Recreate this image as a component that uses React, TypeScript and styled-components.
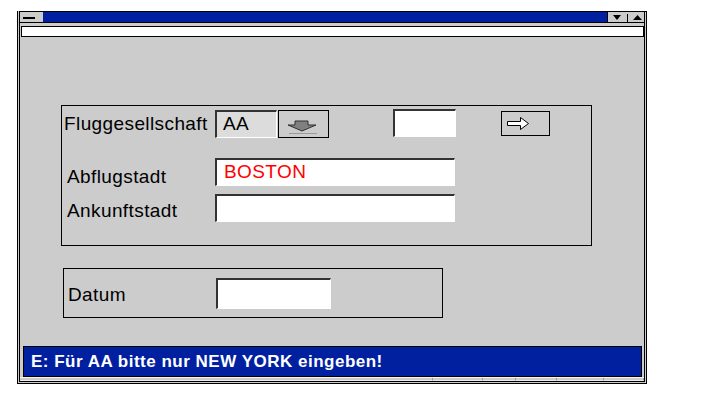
import styled, { createGlobalStyle } from "styled-components";

const GlobalStyle = createGlobalStyle`
  html, body {
    margin: 0;
    padding: 0;
    background: #ffffff;
  }
  body {
    font-family: "Liberation Sans", Arial, sans-serif;
  }
`;

const stripCells = [413, 50, 33, 41, 47];

export default function App() {
  return (
    <>
      <GlobalStyle />
      <Window>
        <TitleBar>
          <SysMenu>
            <SysDash />
          </SysMenu>
          <Caption />
          <TitleButtons>
            <svg width="36" height="10" viewBox="0 0 36 10">
              <polygon points="5,3 13,3 9,8" fill="#000" />
              <line x1="19.5" y1="2" x2="19.5" y2="10" stroke="#000" />
              <polygon points="25,8 34,8 29.5,3" fill="#000" />
            </svg>
          </TitleButtons>
        </TitleBar>
        <MenuLine />

        <Body>
          <Group $width={531} $height={141} $left={41} $top={68}>
            <Row $top={4}>
              <Label $pad={2} $width={153} $offset={3}>
                Fluggesellschaft
              </Label>
              <Field $width={62} $height={28} $bg="#dcdcdc">
                AA
              </Field>
              <PushButton $width={51} $height={28} $left={1}>
                <svg width="49" height="26" viewBox="0 0 49 26">
                  <polygon
                    points="16,10 29,10 29,14 37,14 23,20 9,14 16,14"
                    fill="#808080"
                    stroke="#303030"
                  />
                  <line x1="10" y1="22.5" x2="38" y2="22.5" stroke="#9a9a9a" />
                </svg>
              </PushButton>
              <Field $width={63} $height={28} $left={64} $shift={-1} />
              <PushButton $width={49} $height={25} $left={45} $shift={1}>
                <svg width="47" height="23" viewBox="0 0 47 23">
                  <polygon
                    points="5.5,9.5 18.5,9.5 18.5,5.5 26.5,11.5 18.5,17.5 18.5,13.5 5.5,13.5"
                    fill="#ffffff"
                    stroke="#000"
                  />
                </svg>
              </PushButton>
            </Row>
            <Row $top={20}>
              <Label $pad={5} $width={153} $offset={8}>
                Abflugstadt
              </Label>
              <Field $width={240} $height={28} $color="#ff0000" $indent={7}>
                BOSTON
              </Field>
            </Row>
            <Row $top={8}>
              <Label $pad={5} $width={153} $offset={6}>
                Ankunftstadt
              </Label>
              <Field $width={240} $height={28} />
            </Row>
          </Group>

          <Group $width={380} $height={50} $left={43} $top={22}>
            <Row $top={9}>
              <Label $pad={4} $width={152} $offset={6}>
                Datum
              </Label>
              <Field $width={115} $height={31} />
            </Row>
          </Group>
        </Body>

        <StatusBar>E: Für AA bitte nur NEW YORK eingeben!</StatusBar>
        <Strip>
          {stripCells.map((w, i) => (
            <StripCell key={i} $width={w} />
          ))}
          <StripCell />
        </Strip>
      </Window>
    </>
  );
}

const Window = styled.div`
  box-sizing: border-box;
  width: 630px;
  height: 373px;
  margin: 11px 0 0 17px;
  display: flex;
  flex-direction: column;
  background: #cccccc;
  border: 3px double #000;
  border-top: 1px solid #000;
`;

const TitleBar = styled.div`
  box-sizing: border-box;
  height: 11px;
  display: flex;
  border-bottom: 1px solid #000;
`;

const SysMenu = styled.div`
  width: 23px;
  display: flex;
  align-items: flex-start;
  background: #cccccc;
`;

const SysDash = styled.div`
  width: 12px;
  height: 2px;
  margin: 5px 0 0 3px;
  background: #000;
`;

const Caption = styled.div`
  flex: 1;
  background: #0020a0;
  border-right: 1px solid #000;
`;

const TitleButtons = styled.div`
  width: 36px;
  display: flex;
  background: #cccccc;
`;

const MenuLine = styled.div`
  box-sizing: border-box;
  height: 11px;
  margin: 3px 0 0 1px;
  background: #ffffff;
  border: 1px solid #000;
`;

const Body = styled.div`
  flex: 1;
  display: flex;
  flex-direction: column;
  align-items: flex-start;
`;

const Group = styled.div<{
  $width: number;
  $height: number;
  $left: number;
  $top: number;
}>`
  box-sizing: border-box;
  width: ${(p) => p.$width}px;
  height: ${(p) => p.$height}px;
  margin: ${(p) => p.$top}px 0 0 ${(p) => p.$left}px;
  border: 1px solid #000;
  display: flex;
  flex-direction: column;
`;

const Row = styled.div<{ $top: number }>`
  display: flex;
  align-items: flex-start;
  margin-top: ${(p) => p.$top}px;
`;

const Label = styled.div<{ $pad: number; $width: number; $offset: number }>`
  box-sizing: border-box;
  width: ${(p) => p.$width}px;
  height: 0;
  overflow: visible;
  padding: ${(p) => p.$offset}px 0 0 ${(p) => p.$pad}px;
  font-size: 19px;
  line-height: 22px;
  letter-spacing: 0.4px;
  color: #000;
  white-space: nowrap;
`;

const Field = styled.div<{
  $width: number;
  $height: number;
  $left?: number;
  $shift?: number;
  $bg?: string;
  $color?: string;
  $indent?: number;
}>`
  box-sizing: border-box;
  width: ${(p) => p.$width}px;
  height: ${(p) => p.$height}px;
  margin-left: ${(p) => p.$left ?? 0}px;
  margin-top: ${(p) => p.$shift ?? 0}px;
  padding: 1px 0 0 ${(p) => p.$indent ?? 6}px;
  background: ${(p) => p.$bg ?? "#ffffff"};
  border-top: 2px solid #333;
  border-left: 2px solid #333;
  border-right: 1px solid #fff;
  border-bottom: 1px solid #fff;
  font-size: 19px;
  line-height: 22px;
  letter-spacing: 0.4px;
  color: ${(p) => p.$color ?? "#000"};
`;

const PushButton = styled.div<{
  $width: number;
  $height: number;
  $left: number;
  $shift?: number;
}>`
  box-sizing: border-box;
  width: ${(p) => p.$width}px;
  height: ${(p) => p.$height}px;
  margin-left: ${(p) => p.$left}px;
  margin-top: ${(p) => p.$shift ?? 0}px;
  border: 1px solid #000;
  background: #cccccc;
  display: flex;
`;

const StatusBar = styled.div`
  box-sizing: border-box;
  height: 31px;
  margin: 0 2px 0 3px;
  padding: 1px 0 0 7px;
  background: #0020a0;
  border: 1px solid #000;
  color: #ffffff;
  font-size: 17px;
  font-weight: bold;
  line-height: 28px;
  letter-spacing: 0.5px;
  white-space: nowrap;
`;

const Strip = styled.div`
  height: 3px;
  display: flex;
  border-top: 1px solid #f4f4f4;
`;

const StripCell = styled.div<{ $width?: number }>`
  box-sizing: border-box;
  ${(p) => (p.$width ? `width: ${p.$width}px;` : "flex: 1;")}
  border-right: 1px solid #9a9a9a;
  border-bottom: 1px solid #e8e8e8;
`;
